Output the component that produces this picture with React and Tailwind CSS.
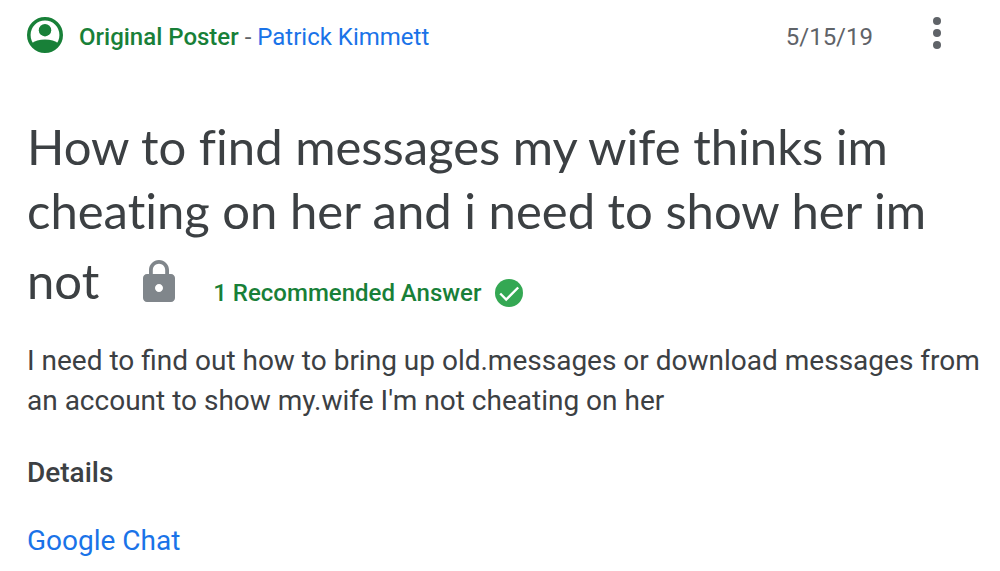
import React from "react";

function PosterIcon() {
  return (
    <svg viewBox="0 0 36 36" className="mt-2 size-9 shrink-0" aria-hidden="true">
      <circle cx="18" cy="18" r="16.2" fill="none" stroke="#188038" strokeWidth="3.6" />
      <circle cx="18" cy="13.2" r="6.2" fill="#188038" />
      <path d="M4.5 26.8C7.5 24 12.5 22.6 18 22.6S28.500 24 31.500 26.800C29 32 24 34.500 18 34.500S7 32 4.500 26.800z" fill="#188038" />
    </svg>
  );
}

function LockIcon() {
  return (
    <svg
      viewBox="0 0 24 24"
      className="mt-4 ml-9 inline-block size-12 align-[-7px]"
      fill="#80868b"
      role="img"
      aria-label="Locked"
    >
      <path d="M18 8h-1V6c0-2.760-2.240-5-5-5S7 3.240 7 6v2H6c-1.100 0-2 .9-2 2v10c0 1.100.9 2 2 2h12c1.100 0 2-.9 2-2V10c0-1.100-.9-2-2-2zM12 17c-1.100 0-2-.9-2-2s.9-2 2-2 2 .9 2 2-.9 2-2 2zM15.100 8H8.900V6c0-1.710 1.390-3.100 3.100-3.100s3.100 1.390 3.100 3.100v2z" />
    </svg>
  );
}

function CheckIcon() {
  return (
    <svg viewBox="0 0 28 28" className="size-7" aria-hidden="true">
      <circle cx="14" cy="14" r="14" fill="#34a853" />
      <path d="M5.200 14.500l6 6L23.200 8.500" fill="none" stroke="#fff" strokeWidth="2.400" />
    </svg>
  );
}

export default function App() {
  return (
    <main className="min-h-screen bg-white pt-[9px] pr-[15px] pb-3 pl-[27px] font-['Roboto',sans-serif] text-[#3c4043]">
      <header className="mr-6 flex items-start text-2xl">
        <PosterIcon />
        <p className="mt-3 ml-4 grow leading-8">
          <span className="font-medium text-[#188038]">Original Poster</span>
          <span className="text-[#5f6368]"> - </span>
          <a href="#profile" className="text-[#1a73e8]">Patrick Kimmett</a>
        </p>
        <time dateTime="2019-05-15" className="mt-3 leading-8 text-[#5f6368]">5/15/19</time>
        <button type="button" aria-label="More options" className="ml-10 flex size-12 shrink-0 items-center justify-center">
          <svg viewBox="0 0 24 24" className="size-12" fill="#5f6368" aria-hidden="true">
            <circle cx="12" cy="6" r="2" />
            <circle cx="12" cy="12" r="2" />
            <circle cx="12" cy="18" r="2" />
          </svg>
        </button>
      </header>
      <div className="mt-[57px] font-['Lato',sans-serif] text-[49px] leading-16">
        <h1 className="inline [font-variant-ligatures:no-common-ligatures]">
          How to find messages my wife thinks im cheating on her and i need to show her im not
        </h1>
        <LockIcon />
        <span className="ml-[30px] inline-flex items-center gap-[14px] align-[-2px] font-['Roboto',sans-serif] text-2xl leading-8 font-medium text-[#188038]">
          1 Recommended Answer
          <CheckIcon />
        </span>
      </div>
      <p className="mt-[29px] text-[28px] leading-10">
        I need to find out how to bring up old.messages or download messages from an account to show my.wife I'm not cheating on her
      </p>
      <h2 className="mt-8 text-[28px] leading-10 font-medium">Details</h2>
      <a href="#google-chat" className="mt-7 inline-block text-[28px] leading-10 text-[#1a73e8]">Google Chat</a>
    </main>
  );
}
